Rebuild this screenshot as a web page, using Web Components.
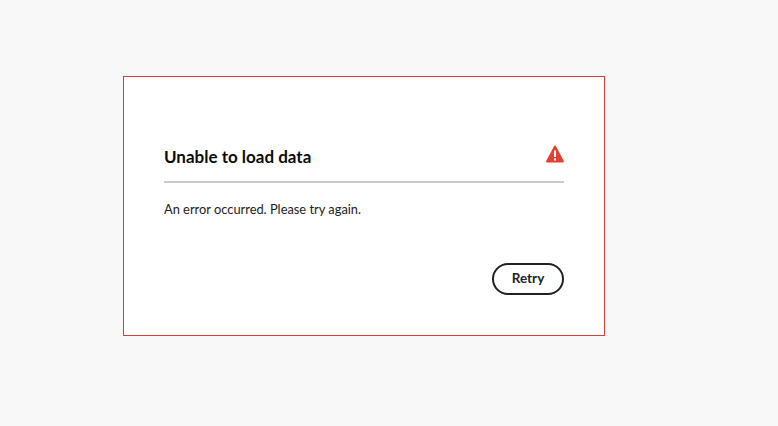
<!DOCTYPE html>
<html lang="en">
<head>
<meta charset="utf-8">
<title>Unable to load data</title>
<style>
	html, body { margin: 0; height: 100%; }
	body {
		background: #f8f8f8;
		color: #222;
		font-family: Lato, "Open Sans", "Liberation Sans", sans-serif;
	}
</style>
</head>
<body>
<error-page>
	<error-dialog heading="Unable to load data">
		An error occurred. Please try again.
		<action-button slot="actions">Retry</action-button>
	</error-dialog>
</error-page>

<script>
class ErrorPage extends HTMLElement {
	constructor() {
		super();
		this.attachShadow({ mode: 'open' });
		this.shadowRoot.innerHTML = `
		<style>
			:host {
				display: block;
				box-sizing: border-box;
				padding: 76px 0 0 123px;
			}
		</style>
		<slot></slot>`;
	}
}

class ErrorDialog extends HTMLElement {
	constructor() {
		super();
		this.attachShadow({ mode: 'open' });
	}

	connectedCallback() {
		this.shadowRoot.innerHTML = `
		<style>
			:host {
				display: block;
				box-sizing: border-box;
				width: 482px;
				height: 260px;
				padding: 64px 40px 0;
				background: #fff;
				border: 1px solid #d13f3f;
			}

			header {
				display: flex;
				align-items: flex-start;
				justify-content: space-between;
				height: 40px;
				border-bottom: 2px solid #cbcbcb;
			}

			h2 {
				margin: 0;
				font-size: 17px;
				font-weight: 700;
				line-height: 32px;
				color: #0c0c0c;
			}

			svg {
				display: block;
				width: 18px;
				height: 18px;
				margin: 4px 0 0;
			}

			.content {
				margin-top: 16px;
				font-size: 12.850px;
				line-height: 20px;
				color: #222;
			}

			.actions {
				display: flex;
				justify-content: flex-end;
				margin-top: 44px;
			}
		</style>
		<header>
			<h2>${this.getAttribute('heading')}</h2>
			<svg viewBox="0 0 18 18" aria-hidden="true">
				<path fill="#e5402f" d="M8.100 1.100.200 16a1 1 0 0 0 .900 1.500h15.800a1 1 0 0 0 .900-1.500L9.900 1.100a1 1 0 0 0-1.800 0Z"/>
				<path fill="#fff" d="M8 5.500h2V12H8Zm0 7.800h2v2.100H8Z"/>
			</svg>
		</header>
		<div class="content"><slot></slot></div>
		<div class="actions"><slot name="actions"></slot></div>`;
	}
}

class ActionButton extends HTMLElement {
	constructor() {
		super();
		this.attachShadow({ mode: 'open' });
		this.shadowRoot.innerHTML = `
		<style>
			:host {
				display: inline-block;
			}

			button {
				box-sizing: border-box;
				width: 72px;
				height: 32px;
				padding: 0;
				background: #fff;
				border: 2px solid #222;
				border-radius: 16px;
				color: #222;
				font: 700 13.500px/1 Lato, "Open Sans", "Liberation Sans", sans-serif;
			}
		</style>
		<button type="button"><slot></slot></button>`;
	}
}

customElements.define('error-page', ErrorPage);
customElements.define('error-dialog', ErrorDialog);
customElements.define('action-button', ActionButton);
</script>
</body>
</html>
